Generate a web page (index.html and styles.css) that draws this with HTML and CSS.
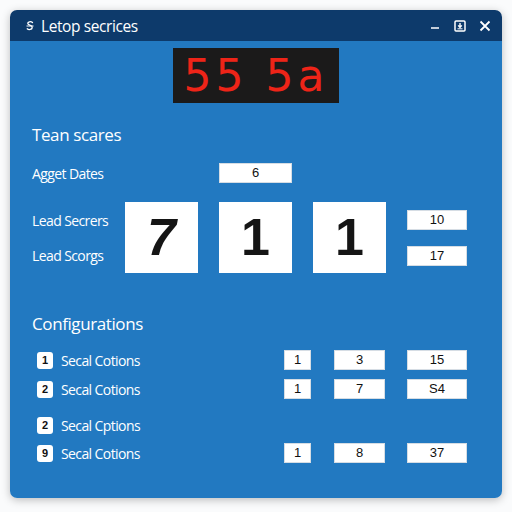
FILE: index.html
```html
<!doctype html>
<html lang="en">
  <head>
    <meta charset="UTF-8" />
    <meta name="viewport" content="width=device-width, initial-scale=1.0" />
    <title>Letop secrices</title>
    <link rel="stylesheet" href="styles.css">
  </head>
  <body>
    <div class="window">
      <div class="titlebar">
        <svg class="app-icon" width="10" height="12" viewBox="0 0 10 12">
          <path d="M7.5 2.5 C6 1.2 2.5 1.5 2.8 3.6 C3.1 5.4 7.4 5 7.2 7.6 C7 9.8 3.6 10 2.2 8.8" fill="none" stroke="#fff" stroke-width="1.3" stroke-linecap="round" />
          <path d="M1.5 6 H8.5" stroke="#fff" stroke-width="1.1" />
        </svg>
        <span class="window-title">Letop secrices</span>
        <div class="window-controls">
          <svg width="12" height="12" viewBox="0 0 12 12">
            <path d="M2 8 H10" stroke="#fff" stroke-width="1.6" />
          </svg>
          <svg width="12" height="12" viewBox="0 0 12 12">
            <rect x="1" y="1" width="10" height="10" rx="1" fill="none" stroke="#fff" stroke-width="1.5" />
            <path d="M6 3 V7 M4.2 5.4 L6 7.4 L7.8 5.4" fill="none" stroke="#fff" stroke-width="1.4" />
            <path d="M3.5 8.8 H8.5" stroke="#fff" stroke-width="1" />
          </svg>
          <svg width="12" height="12" viewBox="0 0 12 12">
            <path d="M1.5 1.5 L10.5 10.5 M10.5 1.5 L1.5 10.5" stroke="#fff" stroke-width="1.8" />
          </svg>
        </div>
      </div>

      <div class="content">
        <div class="led-display">55 5a</div>

        <h2 class="section-title">Tean scares</h2>

        <div class="score-grid">
          <span class="row-label dates-label">Agget Dates</span>
          <div class="cell dates-cell">6</div>

          <span class="row-label lead-one">Lead Secrers</span>
          <span class="row-label lead-two">Lead Scorgs</span>

          <div class="big-box box-a">7</div>
          <div class="big-box box-b">1</div>
          <div class="big-box box-c">1</div>

          <div class="cell side-one">10</div>
          <div class="cell side-two">17</div>
        </div>

        <h2 class="section-title config-title">Configurations</h2>

        <div class="config-list">
          <div class="config-row">
            <span class="badge">1</span>
            <span class="config-label">Secal Cotions</span>
            <div class="cell cell-sm">1</div>
            <div class="cell cell-md">3</div>
            <div class="cell cell-lg">15</div>
          </div>
          <div class="config-row">
            <span class="badge">2</span>
            <span class="config-label">Secal Cotions</span>
            <div class="cell cell-sm">1</div>
            <div class="cell cell-md">7</div>
            <div class="cell cell-lg">S4</div>
          </div>
          <div class="config-row row-spaced">
            <span class="badge">2</span>
            <span class="config-label">Secal Cptions</span>
          </div>
          <div class="config-row">
            <span class="badge">9</span>
            <span class="config-label">Secal Cotions</span>
            <div class="cell cell-sm">1</div>
            <div class="cell cell-md">8</div>
            <div class="cell cell-lg">37</div>
          </div>
        </div>
      </div>
    </div>
  </body>
</html>
```

FILE: styles.css
```css
* {
  margin: 0;
  padding: 0;
  box-sizing: border-box;
}

body {
  font-family: 'Open Sans', 'Noto Sans', sans-serif;
  background: #fafbfc;
  width: 512px;
  height: 512px;
  padding: 10px;
}

.window {
  width: 492px;
  height: 488px;
  border-radius: 7px;
  overflow: hidden;
  display: flex;
  flex-direction: column;
  box-shadow: 0 2px 8px rgba(0, 0, 0, 0.25);
}

/* title bar */
.titlebar {
  height: 31px;
  background: #0d3a6b;
  display: flex;
  align-items: center;
  padding-left: 15px;
  color: #fff;
}

.app-icon {
  margin-right: 6px;
  margin-top: 1px;
}

.window-title {
  font-size: 15.5px;
  font-weight: 500;
  letter-spacing: -0.4px;
}

.window-controls {
  margin-left: auto;
  display: flex;
  align-items: center;
  gap: 13px;
  padding-right: 11px;
}

/* main area */
.content {
  flex: 1;
  background: #2279c1;
  padding: 7px 22px 0 22px;
  color: #fff;
}

.led-display {
  width: 166px;
  height: 55px;
  margin: 0 auto;
  background: #1b1a1a;
  color: #ee2418;
  font-family: 'DejaVu Sans', sans-serif;
  font-size: 44px;
  line-height: 55px;
  text-align: center;
  letter-spacing: 4px;
}

.section-title {
  font-size: 17px;
  font-weight: 400;
  line-height: 20px;
  letter-spacing: -0.4px;
  margin-top: 22px;
}

.config-title {
  margin-top: 41px;
}

/* scores */
.score-grid {
  display: grid;
  grid-template-columns: 72px 73px 73px 73px 60px;
  grid-template-rows: 20px 19px 36px 35px;
  column-gap: 21px;
  margin-top: 18px;
  align-items: center;
}

.row-label {
  font-size: 14px;
  letter-spacing: -0.6px;
  white-space: nowrap;
}

.dates-label { grid-column: 1; grid-row: 1; }
.dates-cell { grid-column: 3; grid-row: 1; }
.lead-one { grid-column: 1; grid-row: 3; }
.lead-two { grid-column: 1; grid-row: 4; }
.box-a { grid-column: 2; grid-row: 3 / 5; }
.box-b { grid-column: 3; grid-row: 3 / 5; }
.box-c { grid-column: 4; grid-row: 3 / 5; }
.side-one { grid-column: 5; grid-row: 3; }
.side-two { grid-column: 5; grid-row: 4; }

.cell {
  height: 20px;
  background: #fff;
  border: 1px solid #d6dde4;
  color: #111;
  font-family: 'Liberation Sans', sans-serif;
  font-size: 13px;
  line-height: 18px;
  text-align: center;
}

.big-box {
  height: 71px;
  align-self: stretch;
  background: #fff;
  color: #151515;
  font-family: 'Liberation Sans', sans-serif;
  font-weight: 700;
  font-size: 52px;
  line-height: 71px;
  text-align: center;
}

.box-a {
  font-style: italic;
}

/* configuration rows */
.config-list {
  margin-top: 16px;
  margin-left: 5px;
  margin-right: 13px;
}

.config-row {
  display: flex;
  align-items: center;
  height: 20px;
  margin-bottom: 9px;
}

.config-row.row-spaced {
  margin-top: 16px;
  margin-bottom: 8px;
}

.badge {
  width: 16px;
  height: 17px;
  border-radius: 3px;
  background: #fff;
  color: #111;
  font-family: 'Liberation Sans', sans-serif;
  font-weight: 700;
  font-size: 11px;
  line-height: 17px;
  text-align: center;
  margin-right: 8px;
}

.config-label {
  flex: 1;
  font-size: 14px;
  letter-spacing: -0.6px;
}

.cell-sm {
  width: 27px;
}

.cell-md {
  width: 51px;
  margin-left: 23px;
}

.cell-lg {
  width: 60px;
  margin-left: 22px;
}
```
